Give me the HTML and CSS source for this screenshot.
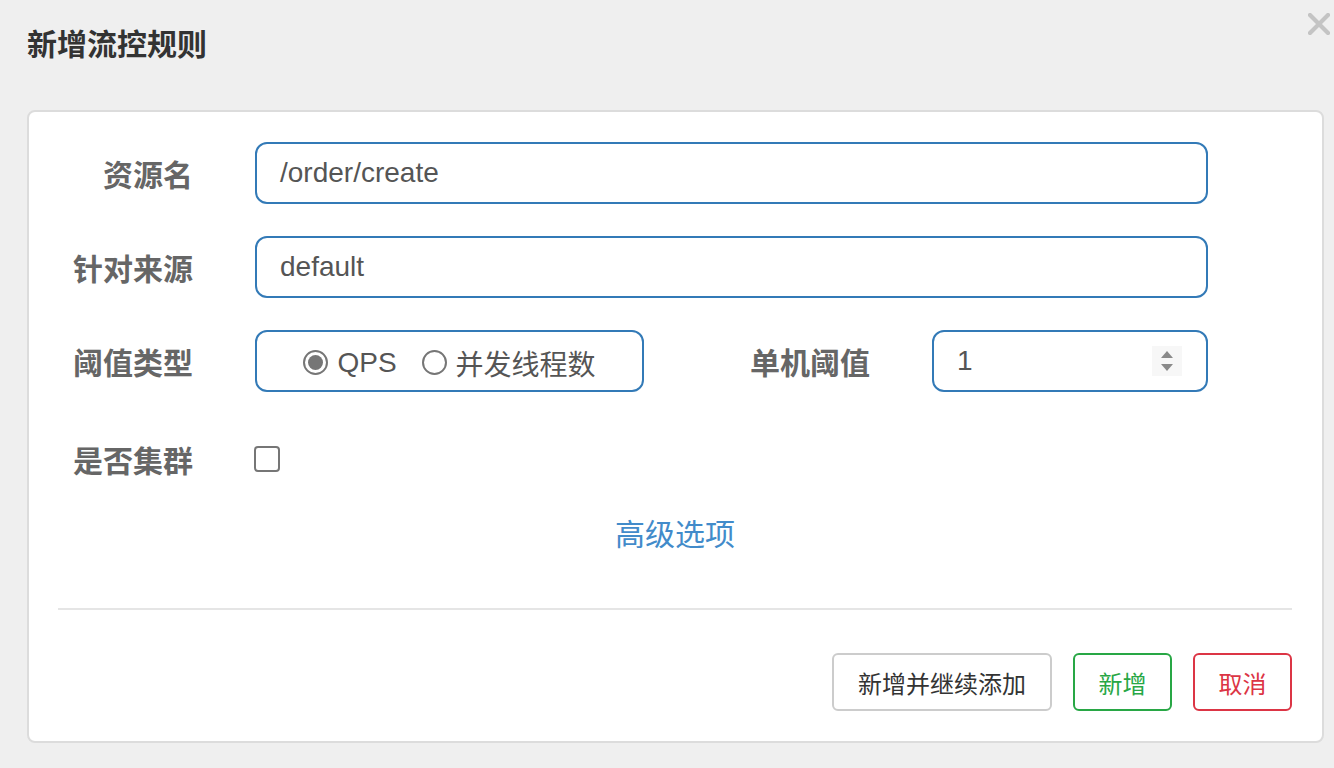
FILE: index.html
```html
<!DOCTYPE html>
<html lang="zh">
<head>
<meta charset="utf-8">
<title>新增流控规则</title>
<link rel="stylesheet" href="styles.css">
</head>
<body>
<div class="dialog">
  <div class="dialog-header">
    <h3 class="dialog-title">新增流控规则</h3>
    <span class="close">
      <svg width="22" height="22" viewBox="0 0 22 22"><path d="M2 2 L20 20 M20 2 L2 20" stroke="#c4c4c4" stroke-width="4.2" stroke-linecap="square"/></svg>
    </span>
  </div>
  <div class="card">
    <form class="form">
      <div class="row">
        <label class="label">资源名</label>
        <div class="input wide">/order/create</div>
      </div>
      <div class="row">
        <label class="label">针对来源</label>
        <div class="input wide">default</div>
      </div>
      <div class="row">
        <label class="label">阈值类型</label>
        <div class="radio-box">
          <span class="radio checked"></span><span class="radio-text">QPS</span>
          <span class="radio"></span><span class="radio-text last">并发线程数</span>
        </div>
        <label class="label label-mid">单机阈值</label>
        <div class="input number">
          <span>1</span>
          <span class="spinner">
            <svg width="14" height="28" viewBox="0 0 14 28"><path d="M1 11 L7 4 L13 11 Z" fill="#8a8a8a"/><path d="M1 17 L7 24 L13 17 Z" fill="#8a8a8a"/></svg>
          </span>
        </div>
      </div>
      <div class="row row-check">
        <label class="label">是否集群</label>
        <span class="checkbox"></span>
      </div>
      <div class="advanced"><a class="link">高级选项</a></div>
    </form>
    <div class="divider"></div>
    <div class="actions">
      <button class="btn btn-default" type="button">新增并继续添加</button>
      <button class="btn btn-success" type="button">新增</button>
      <button class="btn btn-danger" type="button">取消</button>
    </div>
  </div>
</div>
</body>
</html>
```

FILE: styles.css
```css
html, body {
  margin: 0;
  padding: 0;
  background: #efefef;
  font-family: "Liberation Sans", Arial, "Noto Sans CJK SC", sans-serif;
}
.dialog {
  width: 1334px;
  height: 768px;
  box-sizing: border-box;
  padding: 0 10px 0 27px;
}
.dialog-header {
  position: relative;
  height: 110px;
}
.dialog-title {
  margin: 0;
  padding-top: 26px;
  font-size: 30px;
  line-height: 38px;
  font-weight: bold;
  color: #333;
}
.close {
  position: absolute;
  right: -6px;
  top: 13px;
  width: 22px;
  height: 22px;
  display: block;
}
.close svg {
  display: block;
}
.card {
  width: 1297px;
  height: 633px;
  box-sizing: border-box;
  background: #fff;
  border: 2px solid #dcdcdc;
  border-radius: 8px;
  padding: 30px 30px 30px 29px;
  display: flex;
  flex-direction: column;
}
.form {
  display: flex;
  flex-direction: column;
  gap: 32px;
}
.row {
  display: flex;
  align-items: center;
  height: 62px;
}
.label {
  width: 197px;
  box-sizing: border-box;
  padding-right: 62px;
  text-align: right;
  font-size: 30px;
  font-weight: bold;
  color: #666;
  flex: none;
}
.label-mid {
  width: 288px;
}
.input {
  box-sizing: border-box;
  height: 62px;
  border: 2px solid #337ab7;
  border-radius: 12px;
  padding: 0 23px;
  display: flex;
  align-items: center;
  font-size: 28px;
  color: #555;
}
.wide {
  width: 953px;
}
.number {
  width: 276px;
  justify-content: space-between;
  padding-right: 24px;
}
.spinner {
  display: flex;
  align-items: center;
  justify-content: center;
  width: 30px;
  height: 30px;
  background: #f7f7f7;
}
.radio-box {
  box-sizing: border-box;
  width: 389px;
  height: 62px;
  border: 2px solid #337ab7;
  border-radius: 12px;
  display: flex;
  align-items: center;
  justify-content: center;
  font-size: 28px;
  color: #555;
}
.radio {
  box-sizing: border-box;
  width: 25px;
  height: 25px;
  border: 2px solid #767676;
  border-radius: 50%;
  margin-right: 9px;
  position: relative;
  top: 1px;
}
.radio.checked::after {
  content: "";
  position: absolute;
  left: 3px;
  top: 3px;
  width: 15px;
  height: 15px;
  border-radius: 50%;
  background: #767676;
}
.radio-text {
  margin-right: 25px;
  position: relative;
  top: 2px;
}
.radio-text.last {
  margin-right: 0;
}
.row-check {
  height: 62px;
  margin-top: 4px;
  margin-bottom: -4px;
}
.checkbox {
  box-sizing: border-box;
  width: 26px;
  height: 26px;
  border: 2px solid #767676;
  border-radius: 4px;
  margin-left: -1px;
}
.advanced {
  text-align: center;
  padding-left: 0;
  margin-top: -3px;
}
.link {
  font-size: 30px;
  color: #428bca;
  line-height: 40px;
}
.divider {
  margin-top: 53px;
  height: 2px;
  background: #e5e5e5;
}
.actions {
  margin-top: auto;
  display: flex;
  justify-content: flex-end;
  gap: 21px;
}
.btn {
  box-sizing: border-box;
  height: 58px;
  padding: 0 24px;
  background: #fff;
  border: 2px solid #ccc;
  border-radius: 6px;
  font-family: "Liberation Sans", Arial, "Noto Sans CJK SC", sans-serif;
  font-size: 24px;
  color: #333;
  white-space: nowrap;
}
.btn-success {
  width: 99px;
  padding: 0;
  border-color: #28a745;
  color: #28a745;
}
.btn-danger {
  width: 99px;
  padding: 0;
  border-color: #dc3545;
  color: #dc3545;
}
```
